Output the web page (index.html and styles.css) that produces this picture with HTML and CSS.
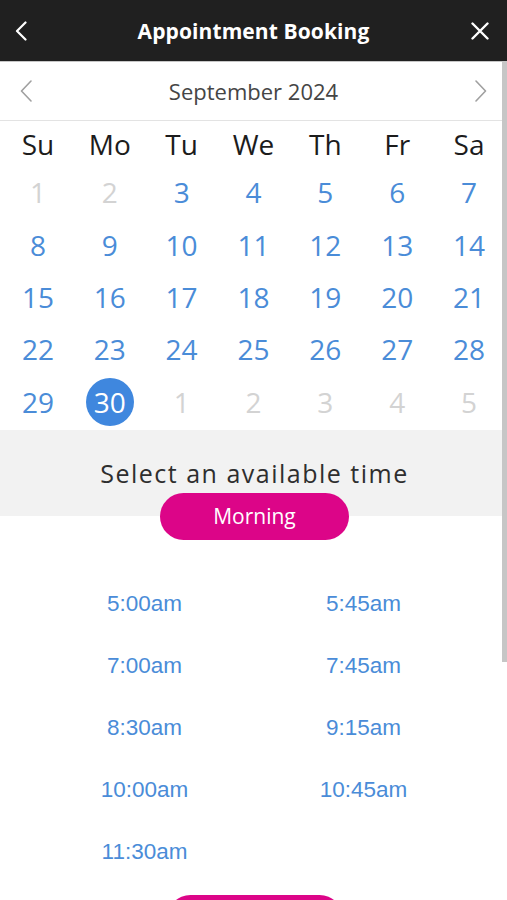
FILE: index.html
```html
<!DOCTYPE html>
<html lang="en">
<head>
<meta charset="utf-8">
<title>Appointment Booking</title>
<link rel="stylesheet" href="styles.css">
</head>
<body>
<div class="app">
  <header class="topbar">
    <button class="icon-btn back" aria-label="Back">
      <svg width="12" height="20" viewBox="0 0 12 20"><path d="M10.5 1.5 L2 10 L10.5 18.5" fill="none" stroke="#fff" stroke-width="2.2" stroke-linecap="round" stroke-linejoin="round"/></svg>
    </button>
    <h1 class="title">Appointment Booking</h1>
    <button class="icon-btn close" aria-label="Close">
      <svg width="18" height="18" viewBox="0 0 18 18"><path d="M1.5 1.5 L16.5 16.5 M16.5 1.5 L1.5 16.5" fill="none" stroke="#fff" stroke-width="2.4" stroke-linecap="round"/></svg>
    </button>
  </header>

  <div class="month-row">
    <span class="nav prev">
      <svg width="12" height="22" viewBox="0 0 12 22"><path d="M11 1 L1.5 11 L11 21" fill="none" stroke="#a0a0a0" stroke-width="1.6" stroke-linecap="round" stroke-linejoin="round"/></svg>
    </span>
    <div class="month">September 2024</div>
    <span class="nav next">
      <svg width="12" height="22" viewBox="0 0 12 22"><path d="M1 1 L10.5 11 L1 21" fill="none" stroke="#a0a0a0" stroke-width="1.6" stroke-linecap="round" stroke-linejoin="round"/></svg>
    </span>
  </div>

  <div class="calendar">
    <div class="wd">Su</div><div class="wd">Mo</div><div class="wd">Tu</div><div class="wd">We</div><div class="wd">Th</div><div class="wd">Fr</div><div class="wd">Sa</div>

    <div class="day off">1</div><div class="day off">2</div><div class="day">3</div><div class="day">4</div><div class="day">5</div><div class="day">6</div><div class="day">7</div>
    <div class="day">8</div><div class="day">9</div><div class="day">10</div><div class="day">11</div><div class="day">12</div><div class="day">13</div><div class="day">14</div>
    <div class="day">15</div><div class="day">16</div><div class="day">17</div><div class="day">18</div><div class="day">19</div><div class="day">20</div><div class="day">21</div>
    <div class="day">22</div><div class="day">23</div><div class="day">24</div><div class="day">25</div><div class="day">26</div><div class="day">27</div><div class="day">28</div>
    <div class="day">29</div><div class="day selected"><span class="dot">30</span></div><div class="day off">1</div><div class="day off">2</div><div class="day off">3</div><div class="day off">4</div><div class="day off">5</div>
  </div>

  <section class="time-head">
    <h2 class="time-title">Select an available time</h2>
    <div class="pill">Morning</div>
  </section>

  <section class="times">
    <div class="slot">5:00am</div><div class="slot">5:45am</div>
    <div class="slot">7:00am</div><div class="slot">7:45am</div>
    <div class="slot">8:30am</div><div class="slot">9:15am</div>
    <div class="slot">10:00am</div><div class="slot">10:45am</div>
    <div class="slot">11:30am</div><div class="slot"></div>
  </section>

  <div class="bottom-btn" role="button" aria-label="Next"></div>

  <div class="scroll-thumb"></div>
</div>
</body>
</html>
```

FILE: styles.css
```css
* { box-sizing: border-box; }

html, body {
  margin: 0;
  padding: 0;
  background: #fff;
}

body {
  font-family: "Open Sans", "Noto Sans", sans-serif;
  width: 507px;
  height: 900px;
  overflow: hidden;
}

.app {
  position: relative;
  width: 507px;
}

/* Top bar */
.topbar {
  display: grid;
  grid-template-columns: 1fr auto 1fr;
  align-items: center;
  height: 62px;
  background: #202020;
  border-bottom: 1px solid #c6c6c6;
}

.icon-btn {
  background: none;
  border: 0;
  padding: 0;
  display: flex;
  align-items: center;
  cursor: pointer;
}

.back { justify-self: start; margin-left: 15px; margin-top: 1px; }
.close { justify-self: end; margin-right: 18px; margin-top: 1px; }

.title {
  margin: 0;
  color: #fff;
  font-size: 21px;
  font-weight: 700;
  letter-spacing: 0.1px;
  line-height: 28px;
}

/* Month row */
.month-row {
  display: grid;
  grid-template-columns: 1fr auto 1fr;
  align-items: center;
  height: 59px;
  border-bottom: 1px solid #e3e3e3;
}

.nav { display: flex; }
.prev { justify-self: start; margin-left: 20px; }
.next { justify-self: end; margin-right: 20px; }

.month {
  font-size: 22px;
  color: #454545;
  line-height: 30px;
}

/* Calendar */
.calendar {
  display: grid;
  grid-template-columns: repeat(7, 1fr);
  grid-template-rows: 45px repeat(5, 52.4px);
  padding: 0 2px;
}

.wd, .day {
  display: flex;
  align-items: center;
  justify-content: center;
  font-size: 28px;
  line-height: 1;
}

.wd {
  color: #1c1c1c;
  padding-top: 1px;
}

.day {
  color: #4a8cd8;
}

.day.off {
  color: #d3d3d3;
}

.dot {
  display: flex;
  align-items: center;
  justify-content: center;
  width: 48px;
  height: 48px;
  border-radius: 50%;
  background: #3f87de;
  color: #fff;
  margin-top: 1px;
}

/* Time header */
.time-head {
  margin-top: 2px;
  background: #f2f2f2;
  padding-top: 28px;
  display: flex;
  flex-direction: column;
  align-items: center;
}

.time-title {
  margin: 0;
  font-size: 25px;
  font-weight: 400;
  letter-spacing: 1.5px;
  line-height: 30px;
  color: #2e2e2e;
  padding-left: 2px;
}

.pill {
  margin-top: 5px;
  margin-bottom: -23.5px;
  width: 189px;
  height: 47px;
  border-radius: 24px;
  background: #dc0588;
  color: #fff;
  font-size: 21px;
  display: flex;
  align-items: center;
  justify-content: center;
  margin-left: 2px;
}

/* Times */
.times {
  display: grid;
  grid-template-columns: 1fr 1fr;
  grid-auto-rows: 62px;
  padding: 56.5px 34px 0 35px;
}

.slot {
  display: flex;
  align-items: center;
  justify-content: center;
  font-family: "Liberation Sans", Arial, sans-serif;
  font-size: 22.5px;
  color: #4a8cd8;
}

.bottom-btn {
  margin: 12px auto 0;
  width: 176px;
  height: 47px;
  border-radius: 24px;
  background: #dc0588;
  position: relative;
  left: 1px;
}

/* Scrollbar overlay */
.scroll-thumb {
  position: absolute;
  top: 62px;
  right: 0;
  width: 5px;
  height: 600px;
  background: #c6c6c6;
}
```
